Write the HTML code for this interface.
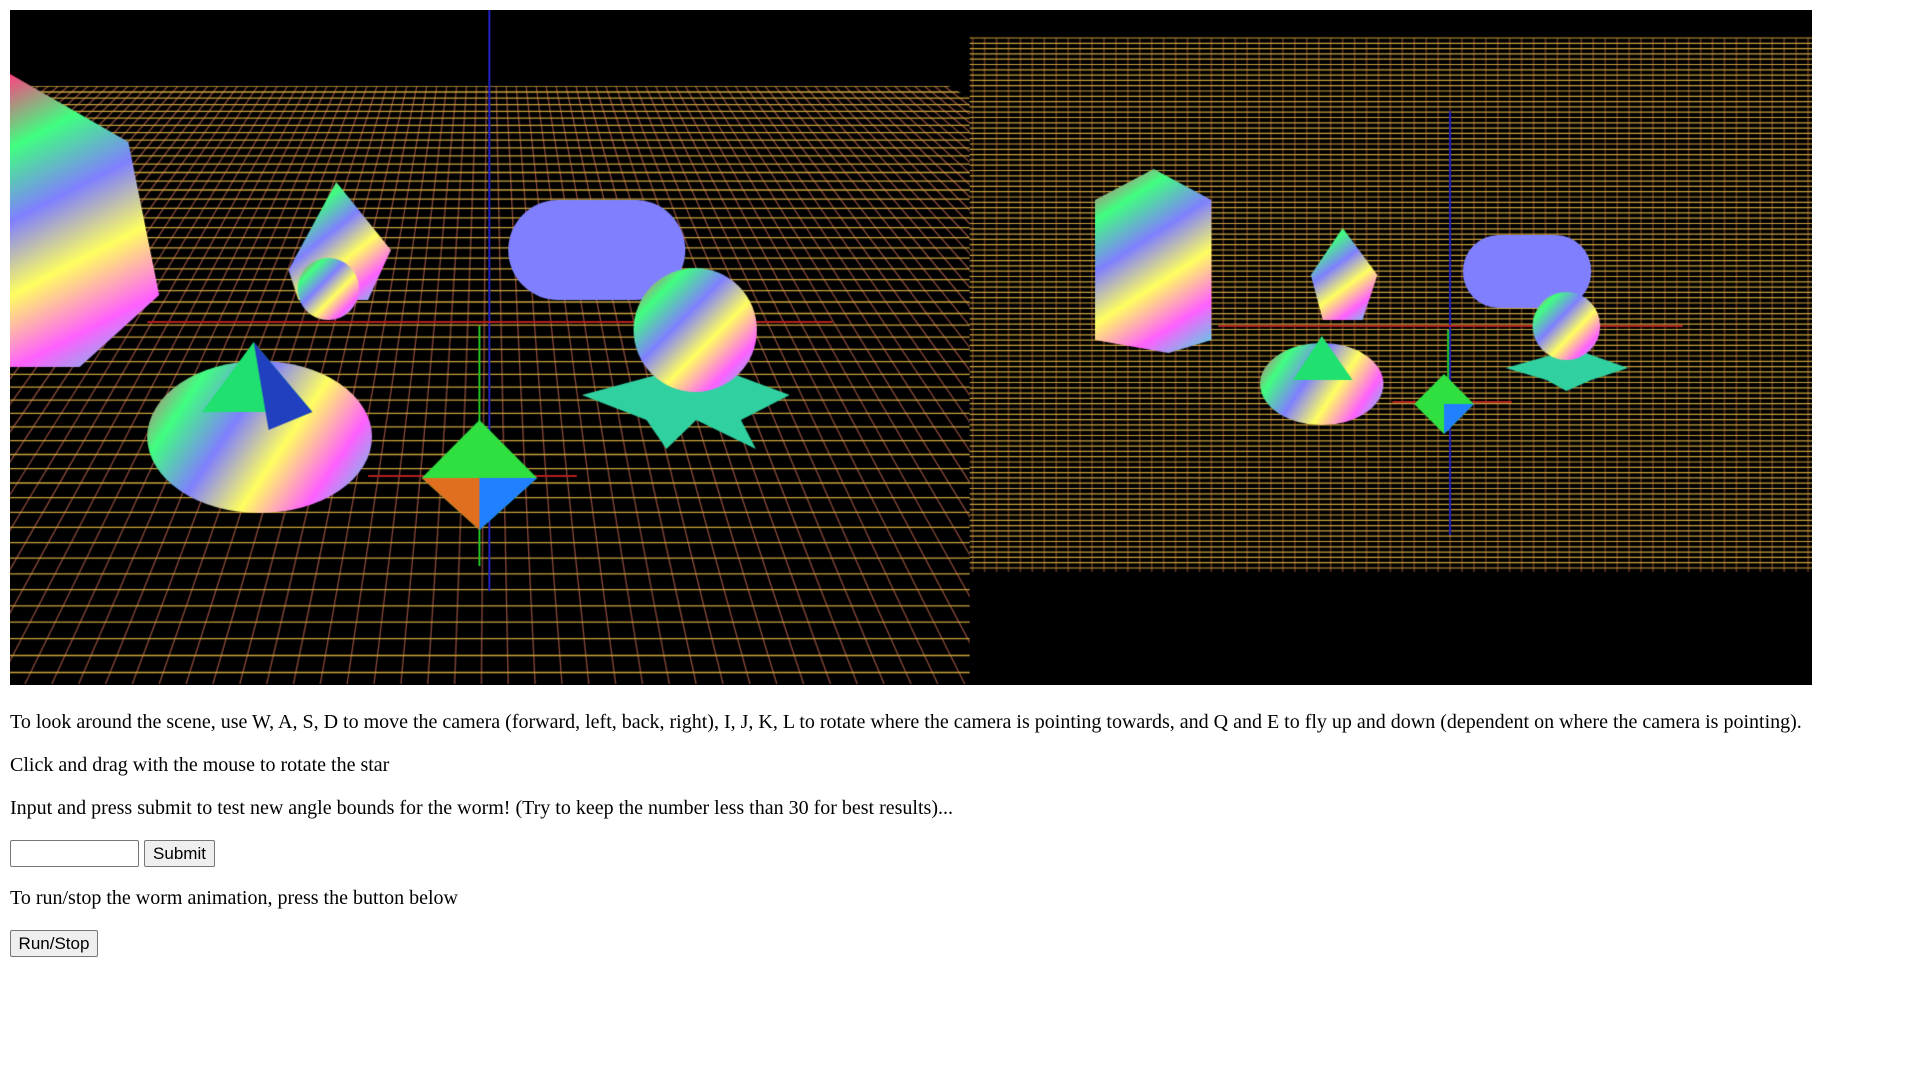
<!DOCTYPE html>
<html><head><meta charset="utf-8"><style>
html,body{margin:0;padding:0;background:#fff}
body{padding:10px;font-family:"Liberation Serif",serif;font-size:20px;color:#000}
canvas{display:block;width:1802px;height:675px}
p{margin:20px 0;line-height:23px;white-space:nowrap}
p.first{margin-top:26px}
.row{height:27px;display:flex;gap:5px}
input{box-sizing:border-box;width:129px;height:27px;border:1px solid #767676;border-radius:2px;margin:0}
button{box-sizing:border-box;height:27px;font-family:"Liberation Sans",sans-serif;font-size:17px;background:#efefef;border:1px solid #767676;border-radius:2px;padding:0;margin:0}
</style></head><body>
<canvas id="c" width="1812" height="675"></canvas>
<p class="first">To look around the scene, use W, A, S, D to move the camera (forward, left, back, right), I, J, K, L to rotate where the camera is pointing towards, and Q and E to fly up and down (dependent on where the camera is pointing).</p>
<p>Click and drag with the mouse to rotate the star</p>
<p>Input and press submit to test new angle bounds for the worm! (Try to keep the number less than 30 for best results)...</p>
<div class="row"><input type="text"><button style="width:71px">Submit</button></div>
<p>To run/stop the worm animation, press the button below</p>
<div class="row"><button style="width:88px">Run/Stop</button></div>
<script>
var c=document.getElementById('c'),g=c.getContext('2d');
var O=10;function X(x){return x-O}function Y(y){return y-O}
g.fillStyle='#000';g.fillRect(0,0,1812,675);
g.save();g.beginPath();g.moveTo(X(10),Y(86));g.lineTo(X(954),Y(86));g.lineTo(X(975),Y(98));g.lineTo(X(975),Y(685));g.lineTo(X(10),Y(685));g.closePath();g.clip();
g.lineWidth=1.3;g.strokeStyle='#8a4a3a';
var vx=492,vy=-266;
for(var xb=-2000;xb<3000;xb+=27){g.beginPath();g.moveTo(X(xb),Y(684));var t=(86-vy)/(684-vy);g.lineTo(X(vx+(xb-vx)*t),Y(86));g.stroke();}
g.strokeStyle='#c8a23c';var y=86,s=6;
while(y<686){g.beginPath();g.moveTo(0,Y(y));g.lineTo(975,Y(y));g.stroke();y+=s;s+=0.22;}
g.restore();
g.lineWidth=1.2;g.strokeStyle='#7a4428';
for(var x=978;x<1822;x+=12){g.beginPath();g.moveTo(X(x),Y(38));g.lineTo(X(x),Y(572));g.stroke();}
g.strokeStyle='#c8a23c';
for(var y2=38;y2<=572;y2+=5.3){g.beginPath();g.moveTo(X(975),Y(y2));g.lineTo(X(1822),Y(y2));g.stroke();}
function line(a,b,cc,d,col,w){g.strokeStyle=col;g.lineWidth=w||2;g.beginPath();g.moveTo(X(a),Y(b));g.lineTo(X(cc),Y(d));g.stroke();}
function rg(x0,y0,x1,y1){var q=g.createLinearGradient(X(x0),Y(y0),X(x1),Y(y1));['#ff4080','#40ff80','#8080ff','#ffff60','#ff60ff','#40e0e0'].forEach(function(c,i){q.addColorStop(i/5,c)});return q}
function poly(p,f){g.fillStyle=f;g.beginPath();g.moveTo(X(p[0]),Y(p[1]));for(var i=2;i<p.length;i+=2)g.lineTo(X(p[i]),Y(p[i+1]));g.closePath();g.fill();}
function ell(x,y,rx,ry,f){g.fillStyle=f;g.beginPath();g.ellipse(X(x),Y(y),rx,ry,0,0,7);g.fill();}
line(492,10,492,591,'#2020c0',2);line(148,322,837,322,'#b02020',2);line(370,476,580,476,'#b02020',2);line(482,326,482,566,'#20c020',2);
line(1458,111,1458,535,'#2020c0',2);line(1225,326,1692,326,'#b02020',2);line(1400,402,1520,402,'#b02020',2);line(1456,330,1456,430,'#20c020',2);
poly([10,74,129,142,160,295,80,367,10,367],rg(10,74,160,367));
poly([338,182,393,250,370,300,300,300,290,270],rg(300,182,393,300));
ell(330,289,31,31,rg(300,260,360,320));
g.fillStyle='#8080ff';g.beginPath();g.roundRect(X(511),Y(200),178,100,50);g.fill();
poly([585,395,660,375,700,357,740,375,794,395,745,420,760,449,700,420,670,449,650,420],'#30d0a0');
ell(699,330,62,62,rg(640,270,760,390));
ell(261,437,113,76,rg(150,360,370,510));
poly([255,342,314,412,203,412],'#20e070');poly([255,342,314,412,270,430],'#2040c0');
poly([482,420,540,478,482,530,424,478],'#30e040');poly([482,478,540,478,482,530],'#2080ff');poly([482,478,424,478,482,530],'#e07020');
poly([1160,169,1218,200,1218,340,1175,353,1101,340,1101,200],rg(1101,169,1218,353));
poly([1350,228,1385,275,1370,320,1330,320,1318,275],rg(1318,228,1385,320));
g.fillStyle='#8080ff';g.beginPath();g.roundRect(X(1471),Y(235),129,73,36);g.fill();
poly([1514,368,1560,355,1575,345,1600,355,1637,368,1600,380,1575,391,1555,380],'#30d0a0');
ell(1575,326,34,34,rg(1540,292,1610,360));
ell(1329,384,62,41,rg(1267,343,1391,425));
poly([1329,336,1360,380,1300,380],'#20e070');
poly([1452,374,1482,404,1452,434,1422,404],'#30e040');poly([1452,404,1482,404,1452,434],'#2080ff');
</script>
</body></html>
